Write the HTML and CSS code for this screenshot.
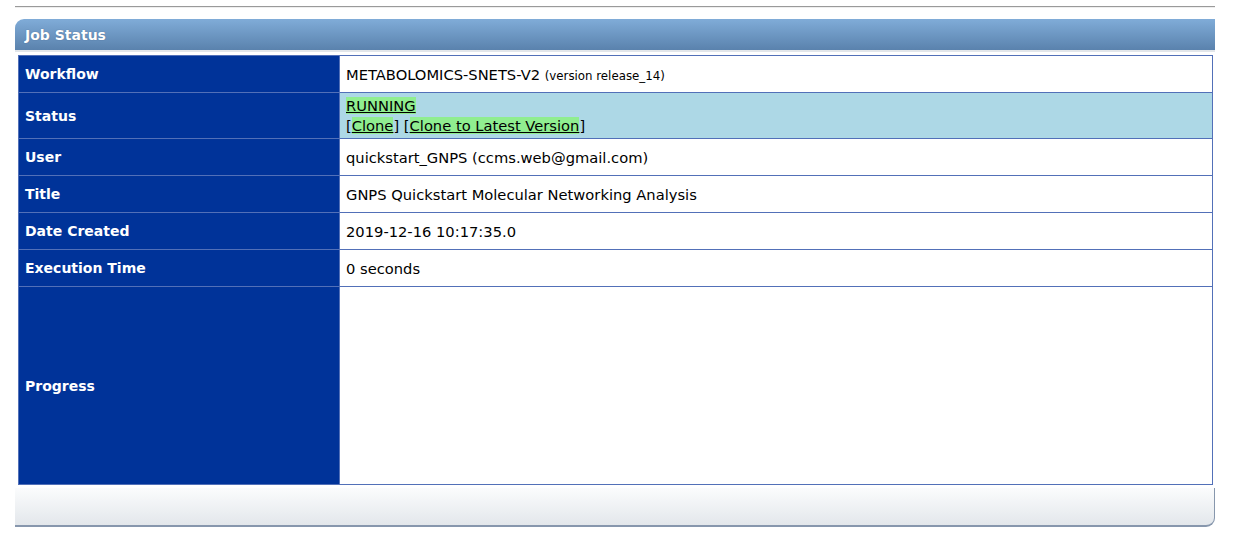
FILE: index.html
```
<!DOCTYPE html>
<html>
<head>
<meta charset="utf-8">
<link rel="stylesheet" href="styles.css">
</head>
<body>
<div class="wrap">
  <div class="rule"></div>
  <div class="panel-head">Job Status</div>
  <table class="status-table">
    <tr class="r-std">
      <th>Workflow</th>
      <td>METABOLOMICS-SNETS-V2 <span class="small">(version release_14)</span></td>
    </tr>
    <tr class="r-status">
      <th>Status</th>
      <td><a class="hl" href="#">RUNNING</a><br>[<a class="hl" href="#">Clone</a>] [<a class="hl" href="#">Clone to Latest Version</a>]</td>
    </tr>
    <tr class="r-std">
      <th>User</th>
      <td>quickstart_GNPS (ccms.web@gmail.com)</td>
    </tr>
    <tr class="r-std">
      <th>Title</th>
      <td>GNPS Quickstart Molecular Networking Analysis</td>
    </tr>
    <tr class="r-std">
      <th>Date Created</th>
      <td>2019-12-16 10:17:35.0</td>
    </tr>
    <tr class="r-std">
      <th>Execution Time</th>
      <td>0 seconds</td>
    </tr>
    <tr class="r-progress">
      <th>Progress</th>
      <td></td>
    </tr>
  </table>
  <div class="panel-foot"></div>
</div>
</body>
</html>
```
FILE: styles.css
```
html, body {
  margin: 0;
  padding: 0;
  background: #ffffff;
}
body {
  font-family: "DejaVu Sans", Verdana, sans-serif;
  font-size: 14.7px;
  color: #000;
}
.wrap {
  width: 1200px;
  padding: 6px 0 0 15px;
}
.rule {
  height: 1px;
  background: #9a9a9a;
  border-bottom: 1px solid #eeeeee;
  margin-bottom: 11px;
}
.panel-head {
  height: 33px;
  line-height: 32px;
  padding-left: 10px;
  box-sizing: border-box;
  border-top-left-radius: 9px;
  background: linear-gradient(#80acd8, #5a82ad);
  color: #fff;
  font-weight: bold;
  font-size: 14px;
  text-shadow: 0 0 1px rgba(40,60,90,0.6);
  border-bottom: 2px solid #e2e6ea;
}
.status-table {
  border-collapse: collapse;
  width: 1195px;
  margin: 3px 0 0 3px;
  border: 1px solid #5270b8;
}
.status-table th,
.status-table td {
  border: 1px solid #5270b8;
  padding: 0 6px;
  text-align: left;
  vertical-align: middle;
}
.status-table th {
  width: 308px;
  background: #003399;
  color: #fff;
  font-weight: bold;
  font-size: 14px;
}
.r-std th, .r-std td { height: 36px; }
.r-status th, .r-status td { height: 45px; }
.r-progress th, .r-progress td { height: 197px; }
.r-status td {
  background: #add8e6;
  line-height: 20px;
}
.hl {
  color: #000;
  background: #90ee90;
  text-decoration: underline;
}
.small {
  font-size: 11.8px;
}
.panel-foot {
  height: 37px;
  margin-top: 3px;
  background: linear-gradient(#fbfcfd, #e3e7eb);
  border-bottom: 2px solid #8797ad;
  border-right: 1px solid #8797ad;
  border-bottom-right-radius: 9px;
}
```
